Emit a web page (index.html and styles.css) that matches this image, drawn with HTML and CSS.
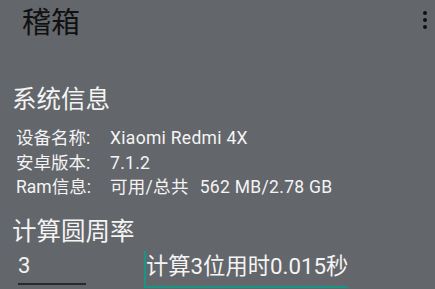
FILE: index.html
```html
<!DOCTYPE html>
<html>
<head>
<meta charset="utf-8">
<link rel="stylesheet" href="styles.css">
</head>
<body>
<div class="app">
  <header class="bar">
    <div class="title">稽箱</div>
    <div class="kebab"><span></span><span></span><span></span></div>
  </header>
  <h2 class="section sys">系统信息</h2>
  <div class="rows">
    <div class="row"><span class="label">设备名称:</span><span class="value">Xiaomi Redmi 4X</span></div>
    <div class="row"><span class="label">安卓版本:</span><span class="value">7.1.2</span></div>
    <div class="row"><span class="label">Ram信息:</span><span class="value">可用/总共<span class="gap"></span>562 MB/2.78 GB</span></div>
  </div>
  <h2 class="section calc">计算圆周率</h2>
  <div class="calc-row">
    <div class="input">3</div>
    <div class="result">计算3位用时0.015秒</div>
  </div>
</div>
</body>
</html>
```
FILE: styles.css
```css
html, body {
  margin: 0;
  padding: 0;
}
body {
  background: #63666b;
  font-family: Roboto, "Noto Sans CJK SC", sans-serif;
  color: #f4f4f4;
  width: 435px;
  height: 289px;
  overflow: hidden;
}
.app {
  display: flex;
  flex-direction: column;
}
.bar {
  height: 46px;
  display: flex;
  justify-content: space-between;
  align-items: flex-start;
}
.title {
  margin: 8px 0 0 22px;
  font-size: 29px;
  line-height: 30px;
  color: #111;
}
.kebab {
  margin: 11px 8px 0 0;
  display: flex;
  flex-direction: column;
  gap: 3px;
}
.kebab span {
  width: 4px;
  height: 4px;
  border-radius: 50%;
  background: #111;
}
.section {
  margin: 0;
  padding-left: 12px;
  font-weight: normal;
  font-size: 24.5px;
  line-height: 25px;
}
.sys {
  margin-top: 41px;
}
.rows {
  margin-top: 14px;
  padding-left: 16px;
  font-size: 17.5px;
}
.row {
  height: 24.5px;
  line-height: 24.5px;
  display: flex;
}
.label {
  width: 94px;
}
.value {
  letter-spacing: 0.3px;
}
.gap {
  display: inline-block;
  width: 11px;
}
.calc {
  margin-top: 19px;
}
.calc-row {
  margin-top: 7px;
  display: flex;
  align-items: flex-start;
}
.input {
  margin-left: 18px;
  width: 68px;
  height: 30px;
  padding-top: 2px;
  font-size: 22px;
  line-height: 26px;
  border-bottom: 2px solid #2a2a2a;
}
.result {
  margin-left: 58px;
  width: 202px;
  height: 33px;
  padding-top: 2px;
  font-size: 22.3px;
  line-height: 26px;
  border-left: 2px solid #179585;
  border-bottom: 2px solid #179585;
  white-space: nowrap;
}
```
